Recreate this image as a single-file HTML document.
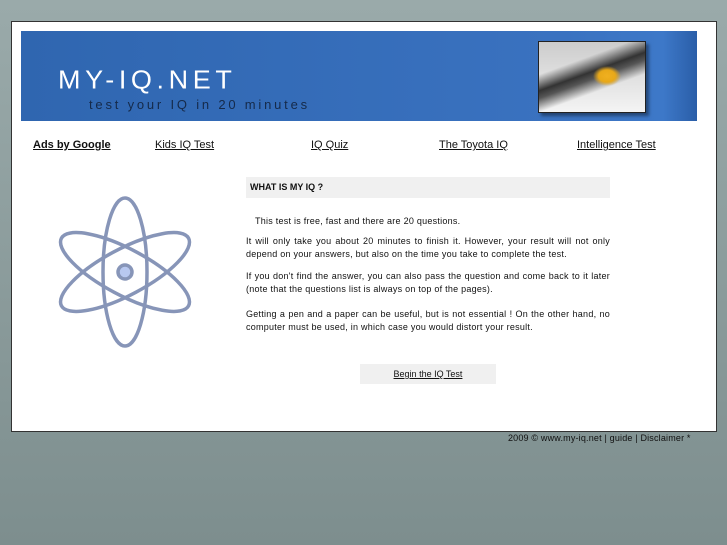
<!DOCTYPE html>
<html><head><style>
html,body{margin:0;padding:0;width:727px;height:545px;overflow:hidden;background:linear-gradient(#9aaaaa,#7d8e8e);font-family:"Liberation Sans",sans-serif;}
#box{position:absolute;left:11px;top:21px;width:704px;height:409px;background:#fff;border:1px solid #333;}
#banner{position:absolute;left:21px;top:31px;width:676px;height:90px;background:linear-gradient(90deg,#2f66b0,#3a72c0 80%,#3d78c8 95%,#2a5ea8);}
#logo{position:absolute;left:37px;top:34px;color:#fff;font-size:27px;letter-spacing:4.6px;transform:scaleY(.95);}
#tag{position:absolute;left:68px;top:66px;color:#152a4a;font-size:13px;letter-spacing:2.8px;}
#eye{position:absolute;left:517px;top:10px;width:106px;height:70px;border:1px solid #222;background:radial-gradient(ellipse 14px 10px at 68px 34px,#f0b020 0,#e8a818 60%,transparent 100%),linear-gradient(160deg,transparent 30%,#333 45%,#555 52%,transparent 65%),linear-gradient(#ccc,#f4f4f4);box-shadow:3px 3px 3px rgba(0,0,0,.4);}
.nav{position:absolute;top:139px;font-size:11px;color:#111;text-decoration:underline;}
#hd{position:absolute;left:246px;top:177px;width:364px;height:21px;background:#f0f0f0;font-size:9px;font-weight:bold;line-height:21px;text-indent:4px;color:#111;}
.p{position:absolute;left:246px;width:364px;font-size:9px;line-height:13px;color:#111;text-align:justify;letter-spacing:.25px;}
#btn{position:absolute;left:360px;top:364px;width:136px;height:20px;background:#f0f0f0;text-align:center;font-size:9px;line-height:20px;text-decoration:underline;color:#111;}
#foot{position:absolute;left:508px;top:433px;font-size:9px;color:#111;letter-spacing:.18px;}
</style></head><body>
<div id="box"></div>
<div id="banner"><div id="logo">MY-IQ.NET</div><div id="tag">test your IQ in 20 minutes</div><div id="eye"></div></div>
<div class="nav" style="left:33px;font-weight:bold">Ads by Google</div>
<div class="nav" style="left:155px">Kids IQ Test</div>
<div class="nav" style="left:311px">IQ Quiz</div>
<div class="nav" style="left:439px">The Toyota IQ</div>
<div class="nav" style="left:577px">Intelligence Test</div>
<svg style="position:absolute;left:45px;top:192px" width="160" height="160">
<g fill="none" stroke="#8795b8" stroke-width="3.5" transform="translate(80,80)">
<ellipse rx="22" ry="74"/>
<ellipse rx="72" ry="23" transform="rotate(28)"/>
<ellipse rx="72" ry="23" transform="rotate(-28)"/>
<circle r="7" fill="#b8c8f0"/>
</g></svg>
<div id="hd">WHAT IS MY IQ ?</div>
<div class="p" style="top:215px;text-indent:9px">This test is free, fast and there are 20 questions.</div>
<div class="p" style="top:235px">It will only take you about 20 minutes to finish it. However, your result will not only depend on your answers, but also on the time you take to complete the test.</div>
<div class="p" style="top:270px">If you don't find the answer, you can also pass the question and come back to it later (note that the questions list is always on top of the pages).</div>
<div class="p" style="top:308px">Getting a pen and a paper can be useful, but is not essential ! On the other hand, no computer must be used, in which case you would distort your result.</div>
<div id="btn">Begin the IQ Test</div>
<div id="foot">2009 © www.my-iq.net | guide | Disclaimer *</div>
</body></html>
